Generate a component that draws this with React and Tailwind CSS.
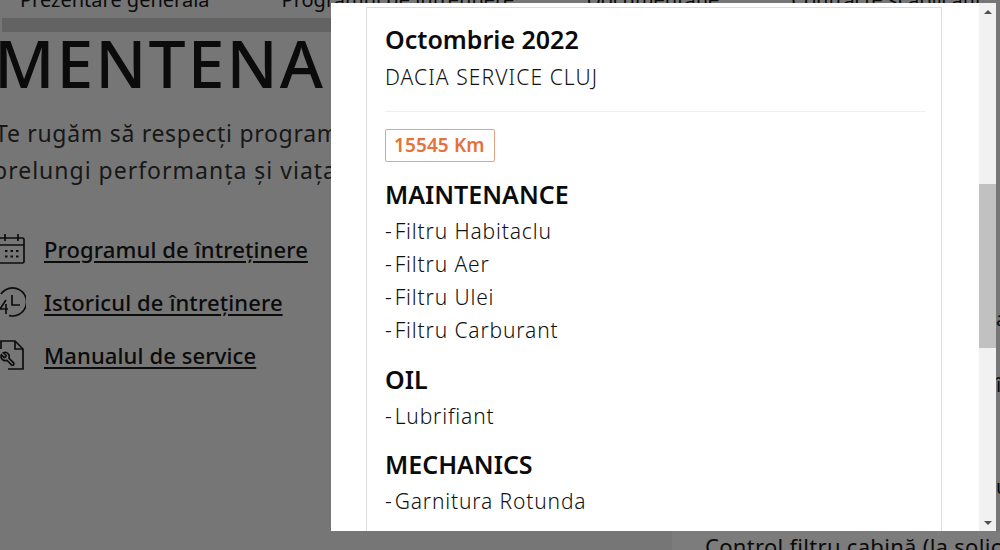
import { useState } from 'react';

const links = [
  { label: 'Programul de întreținere', icon: 'calendar' },
  { label: 'Istoricul de întreținere', icon: 'history' },
  { label: 'Manualul de service', icon: 'manual' },
];

const sections = [
  { title: 'MAINTENANCE', items: ['Filtru Habitaclu', 'Filtru Aer', 'Filtru Ulei', 'Filtru Carburant'] },
  { title: 'OIL', items: ['Lubrifiant'] },
  { title: 'MECHANICS', items: ['Garnitura Rotunda'] },
];

function LinkIcon({ type }) {
  if (type === 'calendar') {
    return (
      <svg width="26" height="30" viewBox="0 0 26 30" fill="none" stroke="#0d0d0d" strokeWidth="1.7" className="shrink-0">
        <rect x="-1" y="4" width="25" height="25" rx="1.5" />
        <path d="M-1 11H24M5 0V7M18 0V7" />
        <path d="M5 17h2.5M10.5 17h2.5M16 17h2.5M5 22.5h2.5M10.5 22.5h2.5M16 22.5h2.5" strokeWidth="2.2" />
      </svg>
    );
  }
  if (type === 'history') {
    return (
      <svg width="26" height="30" viewBox="0 0 26 30" fill="none" stroke="#0d0d0d" strokeWidth="1.7" className="shrink-0">
        <path d="M1 7A14 14 0 1 1 9 28.5" />
        <path d="M12 8V18H20" />
        <path d="M6 13L0 22H8M6 17V27" />
      </svg>
    );
  }
  return (
    <svg width="26" height="30" viewBox="0 0 26 30" fill="none" stroke="#0d0d0d" strokeWidth="1.7" className="shrink-0">
      <path d="M1 9V1H15L23 9V29H8" />
      <path d="M15 1V9H23" />
      <g transform="translate(16 11) scale(-0.68 0.68)" strokeWidth="2.4">
        <path d="M14.7 6.3a1 1 0 0 0 0 1.4l1.6 1.6a1 1 0 0 0 1.4 0l3.77-3.77a6 6 0 0 1-7.94 7.94l-6.91 6.91a2.12 2.12 0 0 1-3-3l6.91-6.91a6 6 0 0 1 7.94-7.94l-3.76 3.76z" />
      </g>
    </svg>
  );
}

function FakeScrollbar() {
  return (
    <div className="flex w-[17px] flex-col bg-[#f1f1f1]">
      <div className="flex h-[17px] items-center justify-center">
        <div className="h-0 w-0 border-x-[4px] border-b-[4px] border-x-transparent border-b-[#505050]" />
      </div>
      <div className="mt-[164px] h-[164px] bg-[#c1c1c1]" />
      <div className="flex-1" />
      <div className="flex h-[17px] items-center justify-center">
        <div className="h-0 w-0 border-x-[4px] border-t-[4px] border-x-transparent border-t-[#505050]" />
      </div>
    </div>
  );
}

export default function App() {
  const [km] = useState(15545);

  return (
    <div className="relative h-[550px] w-[1000px] overflow-hidden bg-[#767676] font-['Noto_Sans',sans-serif] text-[#0b0b0b]">
      {/* Page behind the modal */}
      <div className="flex h-[18px] whitespace-nowrap pl-[20px] text-[20px] leading-[0px] gap-[72px]">
        <span>Prezentare generală</span>
        <span>Programul de întreținere</span>
        <span>Documentație</span>
        <span>Contracte și aplicații</span>
      </div>
      <div className="ml-[2px] h-[14px] w-[330px] bg-[#636363]" />
      <h1 className="mt-[-3px] -ml-[6px] whitespace-nowrap text-[66px] font-medium leading-[66px] tracking-[2px]">MENTENANȚĂ</h1>
      <p className="mt-[20px] -ml-[5px] whitespace-nowrap text-[23px] leading-[37px] tracking-[0.7px] text-[#171717]">
        Te rugăm să respecți programul
        <br />
        <span className="-ml-[2px] inline-block tracking-[1px]">prelungi performanța și viața</span>
      </p>
      <ul className="mt-[45px] flex flex-col gap-[23px]">
        {links.map((link) => (
          <li key={link.label} className="flex h-[30px] items-center gap-[18px]">
            <LinkIcon type={link.icon} />
            <a className="text-[22px] font-medium tracking-[0.12px] underline underline-offset-[3px]">{link.label}</a>
          </li>
        ))}
      </ul>

      {/* Text peeking out on the right of the modal */}
      <div className="absolute bottom-0 left-[672px] right-0 h-[19px] overflow-hidden bg-[#7c7c7c] pl-[33px] text-[22px] leading-[30px] tracking-[0.3px] whitespace-nowrap">
        Control filtru cabină (la solicitare)
      </div>
      <span className="absolute left-[996px] top-[304px] text-[20px]">a</span>
      <span className="absolute left-[996px] top-[370px] text-[20px]">î</span>
      <span className="absolute left-[996px] top-[472px] text-[20px]">u</span>

      {/* Modal */}
      <div className="absolute left-[331px] top-[3px] flex h-[528px] w-[665px] bg-white">
        <div className="flex-1 overflow-hidden pl-[35px] pr-[37px] pt-[4px]">
          <div className="h-[600px] border border-[#dddddd] px-[18px]">
            <h2 className="mt-[14px] text-[25px] font-semibold leading-[34px]">Octombrie 2022</h2>
            <div className="mt-[6px] text-[21px] font-light leading-[30px] tracking-[1.1px] text-[#111111]">DACIA SERVICE CLUJ</div>
            <div className="mt-[19px] -mr-[3px] border-t border-[#eeeeee]" />
            <div className="mt-[17px] inline-block rounded-[2px] border border-[#e2a582] pl-[8px] pr-[9px] text-[19px] font-semibold leading-[31px] tracking-[0.1px] text-[#e8703a]">
              {km} Km
            </div>
            <div className="mt-[16px]">
              {sections.map((section) => (
                <div key={section.title} className="mb-[16.5px]">
                  <h3 className="text-[25px] font-semibold leading-[32px]">{section.title}</h3>
                  <div className="mt-[5px] flex flex-col gap-[1px]">
                    {section.items.map((item) => (
                      <div key={item} className="text-[21px] font-light leading-[32px] tracking-[0.85px] text-[#111111]">
                        -<span className="ml-[2px]">{item}</span>
                      </div>
                    ))}
                  </div>
                </div>
              ))}
            </div>
          </div>
        </div>
        <FakeScrollbar />
      </div>
    </div>
  );
}
